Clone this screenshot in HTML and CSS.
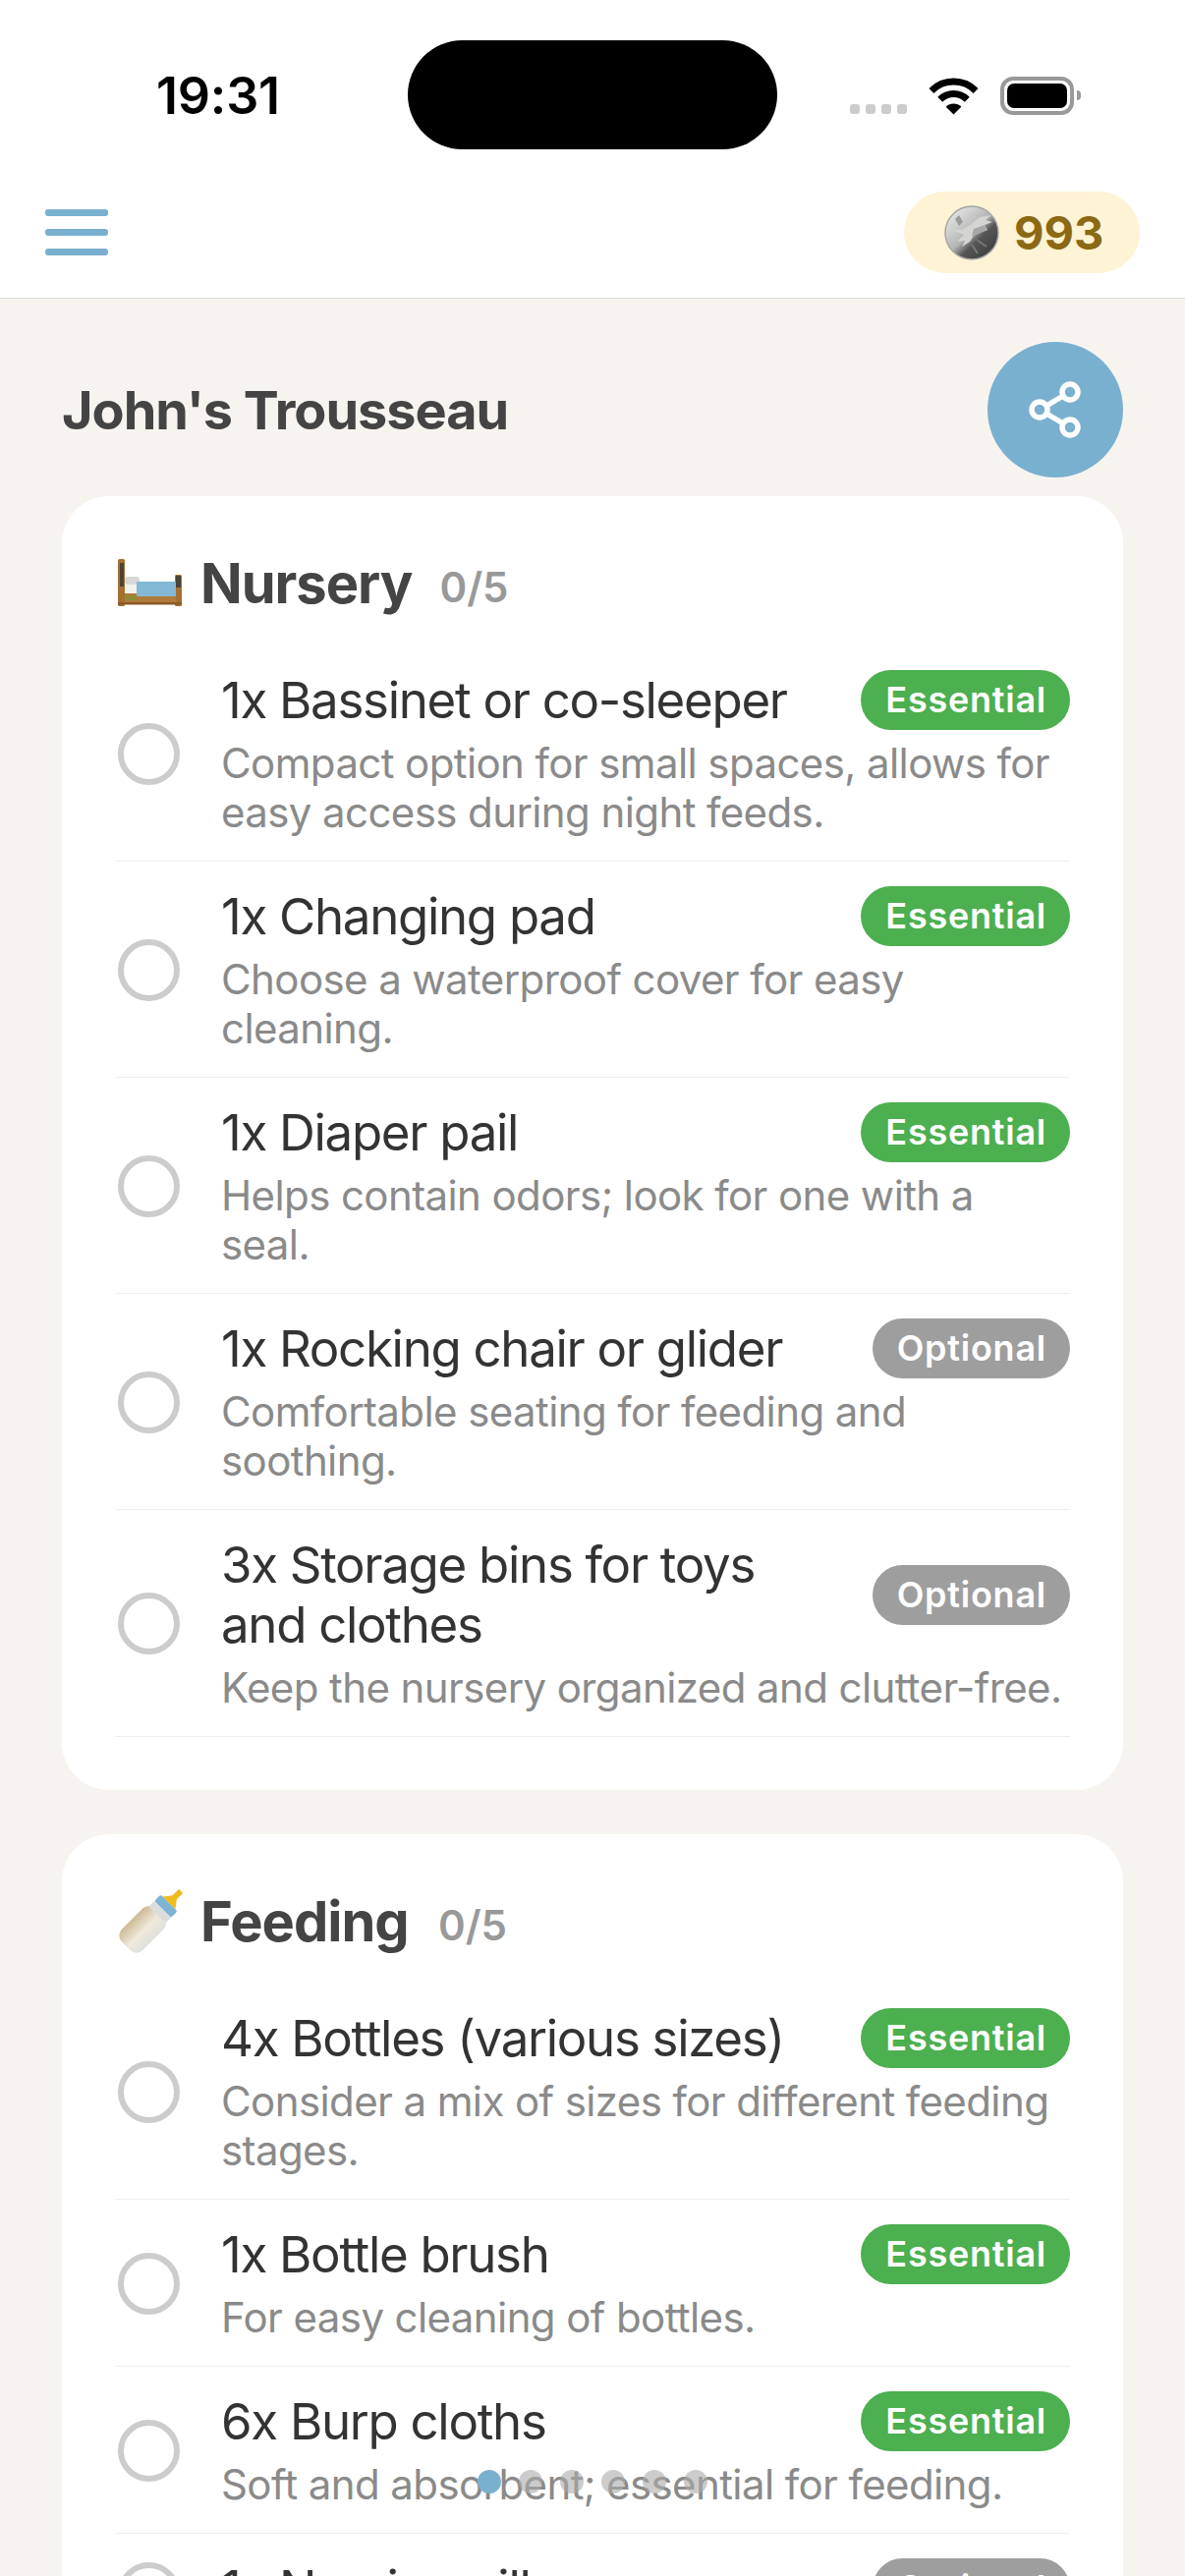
FILE: index.html
```html
<!DOCTYPE html>
<html lang="en">
<head>
    <meta charset="UTF-8">
    <meta name="viewport" content="width=device-width, initial-scale=1.0">
    <title>John's Trousseau</title>
    <link rel="stylesheet" href="styles.css">
</head>
<body>

<div id="screen">
    <header id="top">
        <div class="status">
            <span class="time">19:31</span>
            <div class="island"></div>
            <div class="status-icons">
                <div class="signal"><i></i><i></i><i></i><i></i></div>
                <svg class="wifi" width="51" height="38" viewBox="0 0 51 38">
                    <path d="M2.9 13.4A32 32 0 0 1 48.1 13.4" fill="none" stroke="#000" stroke-width="7"/>
                    <path d="M11.7 22.2A19.5 19.5 0 0 1 39.3 22.2" fill="none" stroke="#000" stroke-width="7"/>
                    <path d="M25.5 37.5L17.7 29.7A11 11 0 0 1 33.3 29.7Z" fill="#000"/>
                </svg>
                <div class="battery"><div class="battery-fill"></div></div>
                <div class="battery-nub"></div>
            </div>
        </div>
        <div class="toolbar">
            <div class="menu"><i></i><i></i><i></i></div>
            <div class="coins">
                <svg class="coin" width="56" height="56" viewBox="0 0 56 56">
                    <defs>
                        <linearGradient id="coinface" x1="0.1" y1="0.1" x2="0.85" y2="0.9">
                            <stop offset="0" stop-color="#e6e8e6"/>
                            <stop offset="0.5" stop-color="#b4b5b4"/>
                            <stop offset="0.68" stop-color="#555"/>
                            <stop offset="1" stop-color="#404040"/>
                        </linearGradient>
                    </defs>
                    <circle cx="28" cy="28" r="27" fill="url(#coinface)" stroke="#a4a6a6" stroke-width="1.5"/>
                    <path d="M8 25L18 25L26 20L36 12L48 10L42 15L49 17L41 20L44 25L36 28L30 31L26 37L18 42L21 36L13 37L20 30Z" fill="#d4d4d2"/>
                    <path d="M30 24L41 20L44 25L36 28L28 32Z" fill="#a8a8a8"/>
                    <path d="M11 14L15 10L19 17L15 21Z" fill="#9a9b9a"/>
                    <path d="M33 35L43 42M28 40L34 49" stroke="#777" stroke-width="2" fill="none"/>
                </svg>
                <span class="coin-count">993</span>
            </div>
        </div>
    </header>

    <main id="content">
        <div class="page-head">
            <h1>John's Trousseau</h1>
            <button class="share" type="button">
                <svg width="60" height="60" viewBox="0 0 60 60" fill="none" stroke="#fff" stroke-width="5.5">
                    <circle cx="45" cy="12" r="8"/>
                    <circle cx="14" cy="30" r="8"/>
                    <circle cx="45" cy="48" r="8"/>
                    <path d="M21 26L38 16M21 34L38 44"/>
                </svg>
            </button>
        </div>

        <section class="card">
            <div class="card-head">
                <svg class="emoji" width="66" height="50" viewBox="0 0 66 50">
                    <rect x="0" y="0" width="7" height="48" rx="1.5" fill="#a66f32"/>
                    <rect x="2" y="4" width="4" height="24" fill="#4a4438"/>
                    <rect x="58" y="16" width="7" height="32" rx="1.5" fill="#a66f32"/>
                    <rect x="59" y="17" width="5" height="12" fill="#4a4438"/>
                    <rect x="7" y="18" width="15" height="8" rx="3" fill="#d8d8d8"/>
                    <rect x="7" y="26" width="15" height="9" fill="#f1f1ef"/>
                    <rect x="7" y="35" width="52" height="10" fill="#b07a3a"/>
                    <rect x="19" y="23" width="40" height="15" rx="1" fill="#84b9d6"/>
                    <rect x="7" y="37" width="12" height="5" fill="#8f8a34"/>
                    <rect x="0" y="44" width="65" height="2.5" fill="#8a5a26"/>
                </svg>
                <h2>Nursery</h2>
                <span class="count">0/5</span>
            </div>

            <div class="item">
                <span class="check"></span>
                <div class="item-body">
                    <div class="item-top">
                        <div class="item-name">1x Bassinet or co-sleeper</div>
                        <span class="badge essential">Essential</span>
                    </div>
                    <p class="item-note">Compact option for small spaces, allows for easy access during night feeds.</p>
                </div>
            </div>
            <div class="item">
                <span class="check"></span>
                <div class="item-body">
                    <div class="item-top">
                        <div class="item-name">1x Changing pad</div>
                        <span class="badge essential">Essential</span>
                    </div>
                    <p class="item-note">Choose a waterproof cover for easy cleaning.</p>
                </div>
            </div>
            <div class="item">
                <span class="check"></span>
                <div class="item-body">
                    <div class="item-top">
                        <div class="item-name">1x Diaper pail</div>
                        <span class="badge essential">Essential</span>
                    </div>
                    <p class="item-note">Helps contain odors; look for one with a seal.</p>
                </div>
            </div>
            <div class="item">
                <span class="check"></span>
                <div class="item-body">
                    <div class="item-top">
                        <div class="item-name">1x Rocking chair or glider</div>
                        <span class="badge optional">Optional</span>
                    </div>
                    <p class="item-note">Comfortable seating for feeding and soothing.</p>
                </div>
            </div>
            <div class="item">
                <span class="check"></span>
                <div class="item-body">
                    <div class="item-top">
                        <div class="item-name">3x Storage bins for toys and clothes</div>
                        <span class="badge optional">Optional</span>
                    </div>
                    <p class="item-note">Keep the nursery organized and clutter-free.</p>
                </div>
            </div>
        </section>

        <section class="card">
            <div class="card-head">
                <svg class="emoji" width="66" height="66" viewBox="0 0 66 66">
                    <defs>
                        <linearGradient id="milk" x1="0" y1="0" x2="1" y2="0">
                            <stop offset="0" stop-color="#cdb994"/>
                            <stop offset="0.55" stop-color="#efe9da"/>
                            <stop offset="1" stop-color="#dfe0dc"/>
                        </linearGradient>
                    </defs>
                    <g transform="rotate(45 33 33)">
                        <rect x="18" y="20" width="30" height="48" rx="9" fill="url(#milk)"/>
                        <rect x="21" y="13" width="24" height="10" rx="2" fill="#d9dedd"/>
                        <rect x="21" y="6" width="24" height="9" rx="2" fill="#7db4d2"/>
                        <path d="M24 6L30 -2L30 -11L36 -11L36 -2L42 6Z" fill="#f2bb1d"/>
                    </g>
                </svg>
                <h2>Feeding</h2>
                <span class="count">0/5</span>
            </div>

            <div class="item">
                <span class="check"></span>
                <div class="item-body">
                    <div class="item-top">
                        <div class="item-name">4x Bottles (various sizes)</div>
                        <span class="badge essential">Essential</span>
                    </div>
                    <p class="item-note">Consider a mix of sizes for different feeding stages.</p>
                </div>
            </div>
            <div class="item">
                <span class="check"></span>
                <div class="item-body">
                    <div class="item-top">
                        <div class="item-name">1x Bottle brush</div>
                        <span class="badge essential">Essential</span>
                    </div>
                    <p class="item-note">For easy cleaning of bottles.</p>
                </div>
            </div>
            <div class="item">
                <span class="check"></span>
                <div class="item-body">
                    <div class="item-top">
                        <div class="item-name">6x Burp cloths</div>
                        <span class="badge essential">Essential</span>
                    </div>
                    <p class="item-note">Soft and absorbent; essential for feeding.</p>
                </div>
            </div>
            <div class="item">
                <span class="check"></span>
                <div class="item-body">
                    <div class="item-top">
                        <div class="item-name">1x Nursing pillow</div>
                        <span class="badge optional">Optional</span>
                    </div>
                </div>
            </div>
        </section>
    </main>

    <div id="pager">
        <i class="active"></i><i></i><i></i><i></i><i></i><i></i>
    </div>
</div>

</body>
</html>
```
FILE: styles.css
```css
body {
    font-family: Inter, "Liberation Sans", sans-serif;
    background-color: #f7f4ef;
    margin: 0;
    padding: 0;
}

#screen {
    position: relative;
    width: 1206px;
    height: 2622px;
    overflow: hidden;
}

#top {
    height: 303px;
    background-color: #fff;
    border-bottom: 1px solid #ddd;
}

.status {
    display: flex;
    align-items: flex-start;
    height: 195px;
    box-sizing: border-box;
    padding: 41px 0 0 159px;
}

.time {
    width: 256px;
    margin-top: 27px;
    font-size: 52px;
    line-height: 60px;
    letter-spacing: -0.2px;
    font-weight: 600;
    color: #000;
}

.island {
    width: 376px;
    height: 111px;
    border-radius: 56px;
    background-color: #000;
}

.status-icons {
    display: flex;
    align-items: flex-end;
    margin: 37px 0 0 74px;
}

.signal {
    display: flex;
    gap: 6px;
    margin-right: 22px;
    margin-bottom: 1px;
}

.signal i {
    width: 10px;
    height: 10px;
    border-radius: 3px;
    background-color: #ccc;
}

.wifi {
    margin-right: 22px;
}

.battery {
    width: 75px;
    height: 39px;
    box-sizing: border-box;
    padding: 3px;
    border: 4px solid #999;
    border-radius: 13px;
}

.battery-fill {
    width: 100%;
    height: 100%;
    border-radius: 7px;
    background-color: #000;
}

.battery-nub {
    width: 4px;
    height: 10px;
    margin: 0 0 15px 3px;
    border-radius: 0 4px 4px 0;
    background-color: #999;
}

.toolbar {
    display: flex;
    justify-content: space-between;
    align-items: center;
    height: 83px;
    padding: 0 46px;
}

.menu {
    display: flex;
    flex-direction: column;
    gap: 13px;
    width: 64px;
}

.menu i {
    height: 7px;
    border-radius: 3px;
    background-color: #7ab0cf;
}

.coins {
    display: flex;
    align-items: center;
    gap: 15px;
    height: 83px;
    padding: 0 41px;
    border-radius: 42px;
    background-color: #fff3d6;
    box-sizing: border-box;
    width: 240px;
}

.coin {
    flex: none;
}

.coin-count {
    font-size: 47px;
    font-weight: 700;
    color: #8b6914;
}

#content {
    padding: 44px 63px 0;
}

.page-head {
    display: flex;
    justify-content: space-between;
    align-items: center;
    margin-bottom: 19px;
}

h1 {
    margin: 0;
    font-size: 54px;
    letter-spacing: -1px;
    font-weight: 700;
    color: #444;
}

.share {
    display: flex;
    justify-content: center;
    align-items: center;
    width: 138px;
    height: 138px;
    padding: 0;
    border: none;
    border-radius: 50%;
    background-color: #7ab0cf;
}

.card {
    margin-bottom: 45px;
    padding: 54px;
    border-radius: 48px;
    background-color: #fff;
}

.card-head {
    display: flex;
    align-items: center;
    height: 70px;
    margin-bottom: 28px;
}

.emoji {
    flex: none;
    margin-left: 3px;
}

h2 {
    min-width: 214px;
    margin: 0 28px 0 18px;
    font-size: 56px;
    letter-spacing: -1px;
    font-weight: 700;
    color: #444;
}

.count {
    font-size: 42px;
    font-weight: 600;
    color: #999;
    margin-top: 6px;
}

.item {
    display: flex;
    align-items: center;
    padding: 25px 0 24px;
    border-bottom: 1px solid #eee;
}

.check {
    flex: none;
    width: 63px;
    height: 63px;
    box-sizing: border-box;
    margin: 0 42px 0 3px;
    border: 6px solid #ccc;
    border-radius: 50%;
}

.item-body {
    flex: 1;
    min-width: 0;
}

.item-top {
    display: flex;
    justify-content: space-between;
    align-items: center;
    gap: 36px;
    margin-bottom: 9px;
}

.item-name {
    font-size: 51px;
    line-height: 61px;
    letter-spacing: -1.3px;
    color: #333;
}

.item-note {
    margin: 0;
    font-size: 42px;
    line-height: 50px;
    letter-spacing: -0.6px;
    color: #8a8a8a;
}

.badge {
    flex: none;
    height: 61px;
    box-sizing: border-box;
    padding: 0 24px 0 25px;
    border-radius: 31px;
    font-size: 36px;
    line-height: 61px;
    letter-spacing: 0.75px;
    font-weight: 600;
    color: #fff;
}

.essential {
    background-color: #4caf50;
}

.optional {
    background-color: #9e9e9e;
}

#pager {
    position: absolute;
    left: 486px;
    top: 2514px;
    display: flex;
    gap: 18px;
}

#pager i {
    width: 24px;
    height: 24px;
    border-radius: 50%;
    background-color: rgba(170, 170, 170, 0.6);
}

#pager .active {
    background-color: #7ab0cf;
}
```
